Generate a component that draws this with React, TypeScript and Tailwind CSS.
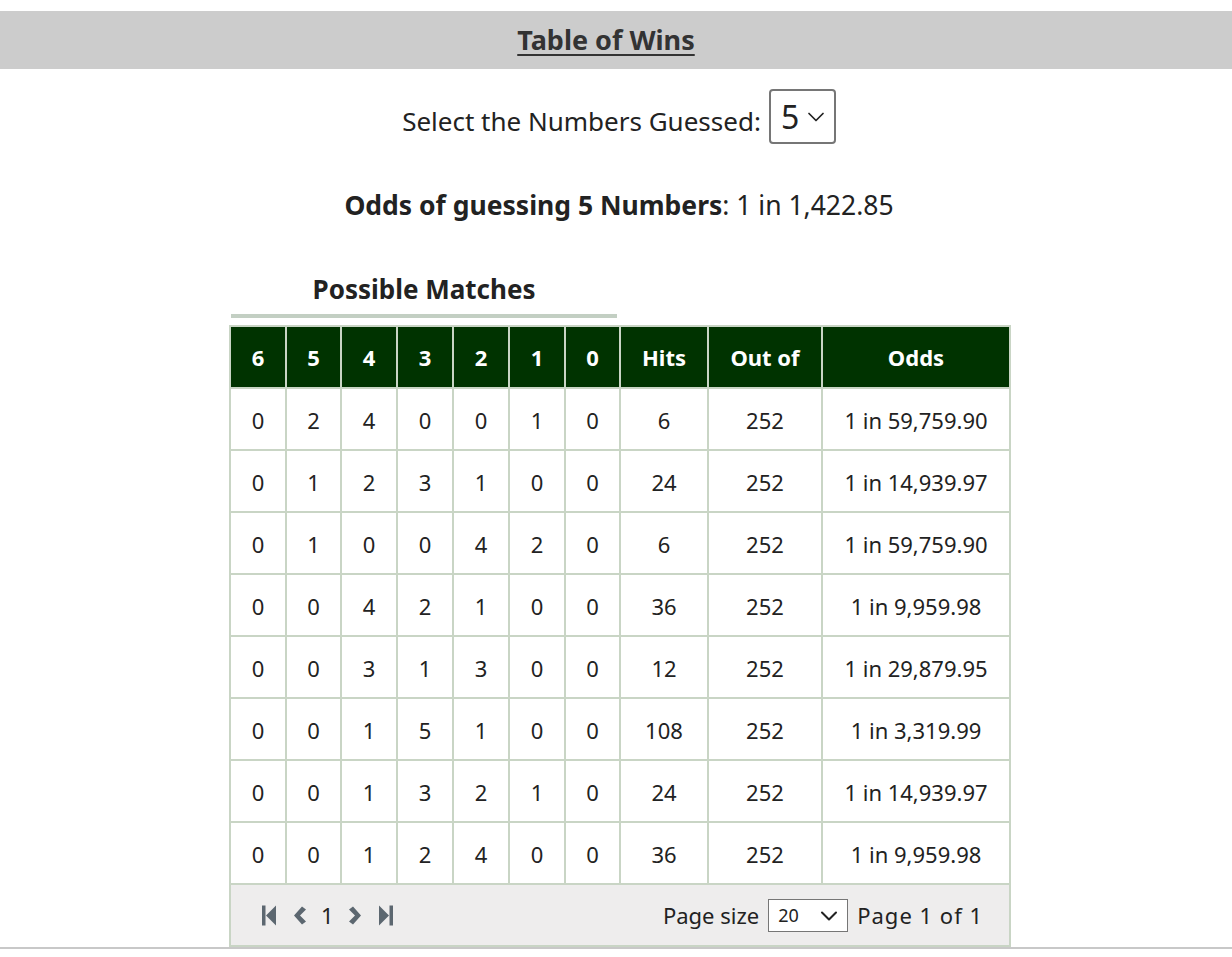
import { ChevronDown } from 'lucide-react';

const rows = [
  [0, 2, 4, 0, 0, 1, 0, 6, 252, '1 in 59,759.90'],
  [0, 1, 2, 3, 1, 0, 0, 24, 252, '1 in 14,939.97'],
  [0, 1, 0, 0, 4, 2, 0, 6, 252, '1 in 59,759.90'],
  [0, 0, 4, 2, 1, 0, 0, 36, 252, '1 in 9,959.98'],
  [0, 0, 3, 1, 3, 0, 0, 12, 252, '1 in 29,879.95'],
  [0, 0, 1, 5, 1, 0, 0, 108, 252, '1 in 3,319.99'],
  [0, 0, 1, 3, 2, 1, 0, 24, 252, '1 in 14,939.97'],
  [0, 0, 1, 2, 4, 0, 0, 36, 252, '1 in 9,959.98'],
];

const headers = ['6', '5', '4', '3', '2', '1', '0', 'Hits', 'Out of', 'Odds'];
const colWidths = ['w-[56px]', 'w-[55px]', 'w-[56px]', 'w-[56px]', 'w-[56px]', 'w-[56px]', 'w-[55px]', 'w-[88px]', 'w-[114px]', 'w-[188px]'];

function PagerIcon({ kind }: { kind: 'first' | 'prev' | 'next' | 'last' }) {
  // small slate glyphs used by the grid pager
  return (
    <svg width="16" height="23" viewBox="0 0 16 22" className="fill-[#5c6770]">
      {kind === 'first' && (
        <>
          <rect x="1" y="1" width="3.5" height="20" />
          <polygon points="15,1 15,21 5,11" />
        </>
      )}
      {kind === 'prev' && <polygon points="11,2 15,5 9,11 15,17 11,20 3,11" />}
      {kind === 'next' && <polygon points="5,2 1,5 7,11 1,17 5,20 13,11" />}
      {kind === 'last' && (
        <>
          <rect x="11.5" y="1" width="3.5" height="20" />
          <polygon points="1,1 1,21 11,11" />
        </>
      )}
    </svg>
  );
}

export default function App() {
  return (
    <div className="min-h-[957px] bg-white text-[#222] font-['Noto_Sans',sans-serif]">
      <div className="pt-[11px]">
        <div className="flex h-[58px] items-center justify-center bg-[#cccccc] pr-[20px]">
          <h1 className="text-[27px] font-bold text-[#333] underline decoration-[2px] underline-offset-[4px]">
            Table of Wins
          </h1>
        </div>
      </div>

      <div className="ml-[6px] flex flex-col items-center">
        <div className="mt-[20px] flex items-center gap-[8px]">
          <span className="mt-[10px] text-[26px]">Select the Numbers Guessed:</span>
          <div className="flex h-[55px] w-[67px] items-center gap-[3px] rounded-[4px] border-2 border-[#767676] pl-[10px]">
            <span className="text-[32px] leading-none">5</span>
            <ChevronDown size={28} strokeWidth={1.5} />
          </div>
        </div>

        <p className="mt-[42px] text-[26.5px]">
          <span className="font-bold">Odds of guessing 5 Numbers</span>: 1 in 1,422.85
        </p>

        <div className="mt-[44px] w-[780px]">
          <div className="w-[390px]">
            <h2 className="text-center text-[26px] font-bold">Possible Matches</h2>
            <div className="ml-[2px] mt-[5px] h-[4px] w-[386px] bg-[#c3cfc3]" />
          </div>

          <table className="mt-[7px] w-[780px] table-fixed border-collapse border-2 border-[#c9d5c5] text-[22px]">
            <thead>
              <tr className="h-[62px] bg-[#003300] text-white">
                {headers.map((h, i) => (
                  <th key={h} className={`${colWidths[i]} border-2 border-[#c9d5c5] pt-[2px] font-bold`}>
                    {h}
                  </th>
                ))}
              </tr>
            </thead>
            <tbody>
              {rows.map((r, ri) => (
                <tr key={ri} className="h-[62px]">
                  {r.map((c, ci) => (
                    <td key={ci} className="border-2 border-[#c9d5c5] pt-[3px] text-center">
                      {c}
                    </td>
                  ))}
                </tr>
              ))}
              <tr className="h-[62px] bg-[#eeeded]">
                <td colSpan={10} className="border-2 border-[#c9d5c5] pl-[30px] pr-[26px] pt-[2px]">
                  <div className="flex items-center justify-between">
                    <div className="flex items-center gap-[14px]">
                      <PagerIcon kind="first" />
                      <PagerIcon kind="prev" />
                      <span>1</span>
                      <PagerIcon kind="next" />
                      <PagerIcon kind="last" />
                    </div>
                    <div className="flex items-center gap-[9px]">
                      <span>Page size</span>
                      <div className="flex h-[33px] w-[80px] items-center justify-between border border-[#767676] bg-white pl-[9px] pr-[4px] text-[18px]">
                        <span>20</span>
                        <ChevronDown size={28} strokeWidth={1.75} />
                      </div>
                      <span className="tracking-[1px]">Page 1 of 1</span>
                    </div>
                  </div>
                </td>
              </tr>
            </tbody>
          </table>
        </div>
      </div>
      <div className="h-[2px] w-full bg-[#c8c8c8]" />
    </div>
  );
}
